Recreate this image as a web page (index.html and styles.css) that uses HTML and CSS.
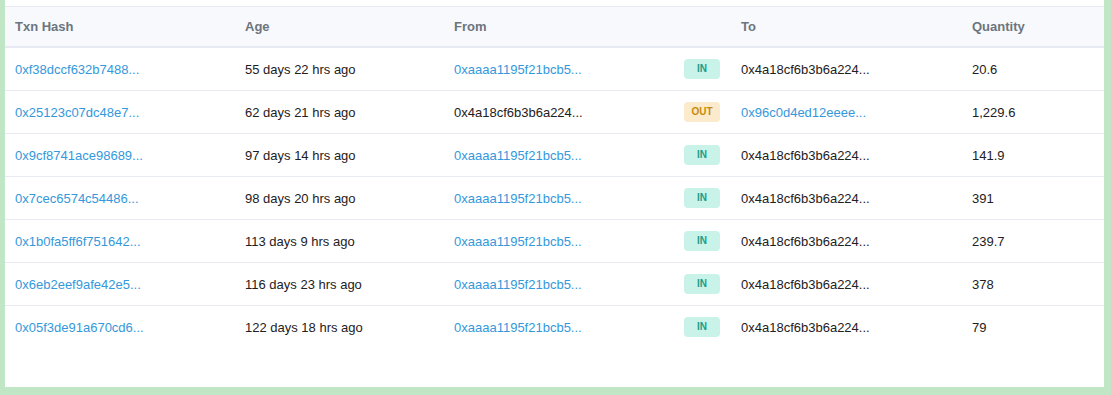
FILE: index.html
```html
<!DOCTYPE html>
<html>
<head>
<meta charset="utf-8">
<link rel="stylesheet" href="styles.css">
</head>
<body>
<div class="panel">
  <table class="txns">
    <colgroup>
      <col class="c-hash"><col class="c-age"><col class="c-from"><col class="c-dir"><col class="c-to"><col class="c-qty">
    </colgroup>
    <thead>
      <tr><th>Txn Hash</th><th>Age</th><th>From</th><th></th><th>To</th><th>Quantity</th></tr>
    </thead>
    <tbody>
      <tr><td><a>0xf38dccf632b7488...</a></td><td>55 days 22 hrs ago</td><td><a>0xaaaa1195f21bcb5...</a></td><td><span class="badge in">IN</span></td><td>0x4a18cf6b3b6a224...</td><td>20.6</td></tr>
      <tr><td><a>0x25123c07dc48e7...</a></td><td>62 days 21 hrs ago</td><td>0x4a18cf6b3b6a224...</td><td><span class="badge out">OUT</span></td><td><a>0x96c0d4ed12eeee...</a></td><td>1,229.6</td></tr>
      <tr><td><a>0x9cf8741ace98689...</a></td><td>97 days 14 hrs ago</td><td><a>0xaaaa1195f21bcb5...</a></td><td><span class="badge in">IN</span></td><td>0x4a18cf6b3b6a224...</td><td>141.9</td></tr>
      <tr><td><a>0x7cec6574c54486...</a></td><td>98 days 20 hrs ago</td><td><a>0xaaaa1195f21bcb5...</a></td><td><span class="badge in">IN</span></td><td>0x4a18cf6b3b6a224...</td><td>391</td></tr>
      <tr><td><a>0x1b0fa5ff6f751642...</a></td><td>113 days 9 hrs ago</td><td><a>0xaaaa1195f21bcb5...</a></td><td><span class="badge in">IN</span></td><td>0x4a18cf6b3b6a224...</td><td>239.7</td></tr>
      <tr><td><a>0x6eb2eef9afe42e5...</a></td><td>116 days 23 hrs ago</td><td><a>0xaaaa1195f21bcb5...</a></td><td><span class="badge in">IN</span></td><td>0x4a18cf6b3b6a224...</td><td>378</td></tr>
      <tr><td><a>0x05f3de91a670cd6...</a></td><td>122 days 18 hrs ago</td><td><a>0xaaaa1195f21bcb5...</a></td><td><span class="badge in">IN</span></td><td>0x4a18cf6b3b6a224...</td><td>79</td></tr>
    </tbody>
  </table>
</div>
</body>
</html>
```

FILE: styles.css
```css
html, body {
  margin: 0;
  padding: 0;
  background: #c0e6c5;
}
body {
  padding: 0 7px 8px 5px;
  font-family: "Liberation Sans", Arial, sans-serif;
  font-size: 13px;
  color: #1e2022;
}
.panel {
  background: #fff;
  height: 387px;
  padding-top: 6px;
  box-sizing: border-box;
}
.txns {
  width: 100%;
  border-collapse: collapse;
  table-layout: fixed;
}
.c-hash { width: 230px; }
.c-age { width: 209px; }
.c-from { width: 230px; }
.c-dir { width: 57px; }
.c-to { width: 231px; }
.c-qty { width: auto; }
.txns thead tr {
  background: #f8f9fc;
  border-top: 1px solid #e7eaf3;
  border-bottom: 2px solid #e7eaf3;
}
.txns th {
  text-align: left;
  font-weight: bold;
  color: #6c757e;
  height: 39px;
  padding: 0 10px;
}
.txns td {
  height: 42px;
  padding: 0 10px;
  white-space: nowrap;
  vertical-align: middle;
}
.txns tbody tr {
  border-bottom: 1px solid #e7eaf3;
}
.txns tbody tr:last-child {
  border-bottom: none;
}
.txns a {
  color: #3498db;
  text-decoration: none;
}
.badge {
  display: inline-block;
  width: 36px;
  height: 20px;
  line-height: 20px;
  text-align: center;
  border-radius: 4px;
  font-size: 10px;
  font-weight: bold;
}
.badge.in {
  background: #c9f2e9;
  color: #1a9e86;
}
.badge.out {
  background: #fbeacb;
  color: #c78a0a;
}
```
